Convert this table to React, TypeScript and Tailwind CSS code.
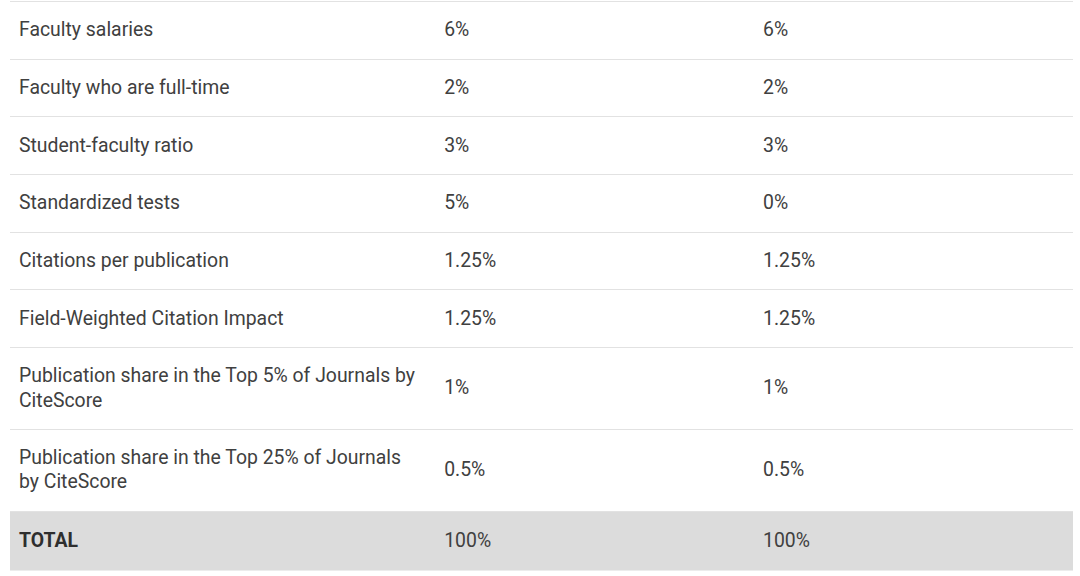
const rows = [
  { label: 'Faculty salaries', a: '6%', b: '6%' },
  { label: 'Faculty who are full-time', a: '2%', b: '2%' },
  { label: 'Student-faculty ratio', a: '3%', b: '3%' },
  { label: 'Standardized tests', a: '5%', b: '0%' },
  { label: 'Citations per publication', a: '1.25%', b: '1.25%' },
  { label: 'Field-Weighted Citation Impact', a: '1.25%', b: '1.25%' },
  { label: 'Publication share in the Top 5% of Journals by CiteScore', a: '1%', b: '1%' },
  { label: 'Publication share in the Top 25% of Journals by CiteScore', a: '0.5%', b: '0.5%' },
]

export default function App() {
  return (
    <div className="min-h-screen bg-white pt-[1px] pl-[10px] pr-[7px] font-['Roboto',sans-serif] text-[19.4px] text-[#404040]">
      <table className="w-full border-collapse table-fixed">
        <colgroup>
          <col className="w-[40%]" />
          <col className="w-[30%]" />
          <col className="w-[30%]" />
        </colgroup>
        <tbody>
          {rows.map((r, i) => (
            <tr key={r.label} className={['border-b border-[#e2e2e2]', i === 0 ? 'border-t' : ''].join(' ')}>
              <td className="pl-[9px] pr-[16px] py-[16.2px] leading-[24.3px] align-middle">{r.label}</td>
              <td className="px-[9px] py-[16.2px] leading-[24.3px] align-middle">{r.a}</td>
              <td className="px-[9px] py-[16.2px] leading-[24.3px] align-middle">{r.b}</td>
            </tr>
          ))}
          <tr className="bg-[#dcdcdc] border-b border-[#ececec]">
            <td className="pl-[9px] pr-[16px] py-[17px] leading-[24.3px] font-bold text-[#2e2e2e]">TOTAL</td>
            <td className="px-[9px] py-[17px] leading-[24.3px]">100%</td>
            <td className="px-[9px] py-[17px] leading-[24.3px]">100%</td>
          </tr>
        </tbody>
      </table>
    </div>
  )
}
